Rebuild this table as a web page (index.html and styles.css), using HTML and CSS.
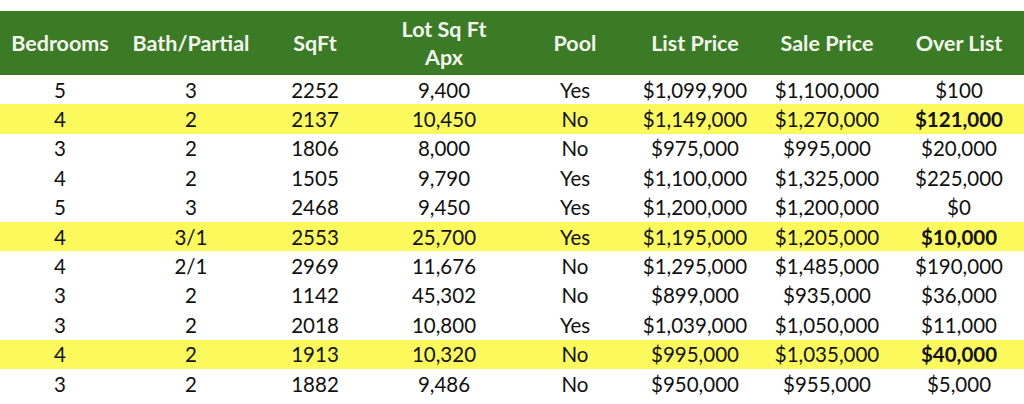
FILE: index.html
```html
<!DOCTYPE html>
<html>
<head>
<meta charset="utf-8">
<link rel="stylesheet" href="styles.css">
</head>
<body>
<div class="wrap">
<table class="sales">
  <colgroup>
    <col class="c1"><col class="c2"><col class="c3"><col class="c4"><col class="c5"><col class="c6"><col class="c7"><col class="c8">
  </colgroup>
  <thead>
    <tr>
      <th>Bedrooms</th><th>Bath/Partial</th><th>SqFt</th><th>Lot Sq Ft<br>Apx</th><th>Pool</th><th>List Price</th><th>Sale Price</th><th>Over List</th>
    </tr>
  </thead>
  <tbody>
    <tr><td>5</td><td>3</td><td>2252</td><td>9,400</td><td>Yes</td><td>$1,099,900</td><td>$1,100,000</td><td>$100</td></tr>
    <tr class="hl"><td>4</td><td>2</td><td>2137</td><td>10,450</td><td>No</td><td>$1,149,000</td><td>$1,270,000</td><td class="b">$121,000</td></tr>
    <tr><td>3</td><td>2</td><td>1806</td><td>8,000</td><td>No</td><td>$975,000</td><td>$995,000</td><td>$20,000</td></tr>
    <tr><td>4</td><td>2</td><td>1505</td><td>9,790</td><td>Yes</td><td>$1,100,000</td><td>$1,325,000</td><td>$225,000</td></tr>
    <tr><td>5</td><td>3</td><td>2468</td><td>9,450</td><td>Yes</td><td>$1,200,000</td><td>$1,200,000</td><td>$0</td></tr>
    <tr class="hl"><td>4</td><td>3/1</td><td>2553</td><td>25,700</td><td>Yes</td><td>$1,195,000</td><td>$1,205,000</td><td class="b">$10,000</td></tr>
    <tr><td>4</td><td>2/1</td><td>2969</td><td>11,676</td><td>No</td><td>$1,295,000</td><td>$1,485,000</td><td>$190,000</td></tr>
    <tr><td>3</td><td>2</td><td>1142</td><td>45,302</td><td>No</td><td>$899,000</td><td>$935,000</td><td>$36,000</td></tr>
    <tr><td>3</td><td>2</td><td>2018</td><td>10,800</td><td>Yes</td><td>$1,039,000</td><td>$1,050,000</td><td>$11,000</td></tr>
    <tr class="hl"><td>4</td><td>2</td><td>1913</td><td>10,320</td><td>No</td><td>$995,000</td><td>$1,035,000</td><td class="b">$40,000</td></tr>
    <tr><td>3</td><td>2</td><td>1882</td><td>9,486</td><td>No</td><td>$950,000</td><td>$955,000</td><td>$5,000</td></tr>
  </tbody>
</table>
</div>
</body>
</html>
```

FILE: styles.css
```css
html, body {
  margin: 0;
  padding: 0;
  background: #ffffff;
}
.wrap {
  padding-top: 11px;
  width: 1024px;
  overflow: hidden;
}
.sales {
  width: 1024px;
  border-collapse: collapse;
  table-layout: fixed;
  font-family: Lato, "Open Sans", sans-serif;
  font-size: 20.5px;
  color: #111111;
}
.c1 { width: 120px; }
.c2 { width: 142px; }
.c3 { width: 106px; }
.c4 { width: 152px; }
.c5 { width: 110px; }
.c6 { width: 130px; }
.c7 { width: 134px; }
.c8 { width: 130px; }
.sales th {
  background: #3b7b26;
  color: #f4f6ee;
  font-weight: 700;
  font-size: 21.5px;
  line-height: 28px;
  height: 64px;
  padding: 0;
  text-align: center;
  vertical-align: middle;
  white-space: nowrap;
}
.sales td {
  height: 29.4px;
  padding: 0;
  text-align: center;
  vertical-align: middle;
  white-space: nowrap;
  line-height: 22px;
}
.sales tr.hl td {
  background: #fbf95c;
}
.sales td.b {
  font-weight: 700;
}
```
